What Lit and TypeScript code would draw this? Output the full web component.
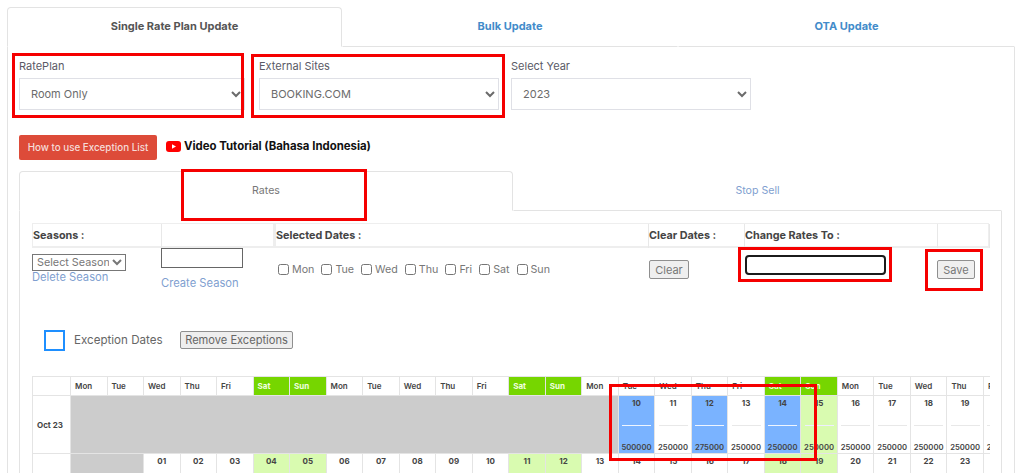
import { LitElement, html, css } from "lit";
import { customElement } from "lit/decorators.js";

type Kind = "w" | "g" | "b";
const heads = ["Mon", "Tue", "Wed", "Thu", "Fri", "Sat", "Sun"];
const week = Array.from({ length: 26 }, (_, i) => heads[i % 7]);
const row1: { d: string; p: string; k: Kind }[] = [
  { d: "10", p: "500000", k: "b" },
  { d: "11", p: "250000", k: "w" },
  { d: "12", p: "275000", k: "b" },
  { d: "13", p: "250000", k: "w" },
  { d: "14", p: "250000", k: "b" },
  { d: "15", p: "250000", k: "g" },
  { d: "16", p: "250000", k: "w" },
  { d: "17", p: "250000", k: "w" },
  { d: "18", p: "250000", k: "w" },
  { d: "19", p: "250000", k: "w" },
  { d: "20", p: "250000", k: "w" },
];
const row2 = Array.from({ length: 24 }, (_, i) => {
  const col = i + 2;
  const wd = col % 7;
  return { d: String(i + 1).padStart(2, "0"), k: wd === 5 || wd === 6 ? "g" : "w" };
});

@customElement("app-root")
export class AppRoot extends LitElement {
  static styles = css`
    :host {
      display: block;
      position: relative;
      width: 1024px;
      height: 473px;
      overflow: hidden;
      background: #fff;
      font-family: Inter, "Open Sans", sans-serif;
      color: #555;
      font-size: 11px;
      box-sizing: border-box;
      padding: 7px 9px 0 7px;
    }
    * { box-sizing: border-box; }
    .tabs { display: grid; grid-template-columns: 335px 336px 1fr; height: 40px; }
    .tab {
      display: flex;
      align-items: center;
      justify-content: center;
      font-weight: 700;
      font-size: 11px;
      color: #428bca;
      border: 1px solid transparent;
      border-bottom-color: #e3e3e3;
      padding-bottom: 3px;
    }
    .tab.on {
      color: #555;
      border-color: #e3e3e3;
      border-bottom-color: transparent;
      border-radius: 4px 4px 0 0;
    }
    .pane {
      border: 1px solid #e3e3e3;
      border-top: 0;
      padding: 11px 12px 0 11px;
      height: 430px;
    }
    .forms { display: grid; grid-template-columns: 240px 252px 252px; }
    .group label { display: block; font-size: 11px; line-height: 16px; margin-bottom: 4px; color: #5a5a66; }
    .group { padding-right: 12px; }
    .group:first-child { padding-right: 14px; }
    .group select {
      display: block;
      width: 100%;
      height: 32px;
      border: 1px solid #dfe0e6;
      background: #fff;
      color: #6b6b6b;
      font: 11px Inter, sans-serif;
      padding-left: 7px;
      border-radius: 0;
    }
    .help { display: flex; align-items: center; margin-top: 25px; height: 25px; }
    .red-btn {
      width: 138px;
      height: 25px;
      background: #dd4b39;
      border: 0;
      border-radius: 2px;
      color: #f6dcd8;
      font: 500 9.8px Inter, sans-serif;
      padding: 0;
    }
    .yt { display: block; margin: 0 3px 3px 9px; }
    .video { font-weight: 700; font-size: 11.4px; color: #111; margin-bottom: 3px; }
    .inner-tabs { display: grid; grid-template-columns: 494px 1fr; height: 40px; margin-top: 11px; }
    .itab {
      display: flex;
      align-items: center;
      justify-content: center;
      font-size: 10.6px;
      color: #7f9fd0;
      border: 1px solid transparent;
      border-bottom-color: #e3e3e3;
      padding-bottom: 2px;
    }
    .itab.on {
      color: #777;
      border-color: #e3e3e3;
      border-bottom-color: transparent;
      border-radius: 4px 4px 0 0;
    }
    .inner {
      border: 1px solid #e3e3e3;
      border-top: 0;
      padding: 12px 12px 0 12px;
      height: 280px;
    }
    .cols {
      display: grid;
      grid-template-columns: 129px 114px 373px 96px 193px 52px;
    }
    .cols.head {
      height: 25px;
      border: 1px solid #eee;
      border-width: 1px 1px 2px 1px;
    }
    .cols.head > div {
      border-right: 1px solid #e8e8e8;
      font-weight: 700;
      font-size: 10.8px;
      color: #444;
      line-height: 24px;
      white-space: nowrap;
    }
    .cols.head > div:nth-child(2) { border-right: 3px solid #eee; }
    .cols.body { height: 82px; }
    .link { color: #7f9fd0; font-size: 11.2px; line-height: 14px; white-space: nowrap; }
    .c1 { padding-top: 6px; }
    .c1 select {
      display: block;
      width: 94px;
      height: 17px;
      font: 10.8px Inter, sans-serif;
      color: #777;
      background: #fff;
      border: 1px solid #777;
      border-radius: 0;
      padding: 0;
    }
    .c1 .link { margin-top: -1px; }
    .c2 input {
      display: block;
      width: 82px;
      height: 20px;
      border: 1px solid #666;
      border-radius: 0;
      margin-bottom: 8px;
    }
    .c3 { display: flex; align-items: flex-start; gap: 7px; padding: 14px 0 0 3px; }
    .day { display: flex; align-items: center; gap: 3px; font-size: 10.7px; color: #777; height: 14px; }
    .day input { margin: 0; width: 11px; height: 11px; }
    .gbtn {
      height: 19px;
      background: #efefef;
      border: 1px solid #8f8f8f;
      border-radius: 2px;
      font: 11px Inter, sans-serif;
      color: #777;
      padding: 0;
    }
    .c4 { padding: 12px 0 0 1px; }
    .c4 .gbtn { width: 40px; }
    .c5 { padding: 7px 0 0 1px; }
    .c5 input {
      display: block;
      width: 141px;
      height: 20px;
      border: 2px solid #1b1b1b;
      border-radius: 4px;
      outline: none;
    }
    .c6 { padding-top: 12px; }
    .c6 .gbtn { width: 38px; }
    .exc { display: flex; align-items: center; height: 22px; margin: -1px 0 0 12px; }
    .sq { width: 21px; height: 21px; border: 2px solid #1e8fff; }
    .exc span { margin-left: 9px; font-size: 11.6px; color: #666; width: 106px; white-space: nowrap; }
    .exc .gbtn { width: 113px; height: 18px; font-size: 11.1px; background: #eee; color: #666; }
    .cal {
      position: absolute;
      left: 32px;
      top: 376px;
      width: 958px;
      height: 97px;
      overflow: hidden;
      background: #e4e4e4;
      padding: 1px 0 0 1px;
    }
    .cal-grid {
      display: grid;
      grid-template-columns: 37px repeat(26, 35.52px);
      grid-template-rows: 18px 57px 40px;
      gap: 1px;
      width: max-content;
    }
    .cell { background: #fff; font-size: 8px; color: #444; font-weight: 600; white-space: nowrap; overflow: hidden; }
    .hd { padding: 0 0 0 4px; line-height: 18px; }
    .hd.we { background: #76d600; color: #f2ffe0; font-weight: 700; }
    .lbl { display: flex; align-items: center; padding-left: 4px; font-weight: 700; }
    .grey { background: #ccc; }
    .d {
      display: flex;
      flex-direction: column;
      align-items: center;
      font-size: 8px;
      font-weight: 700;
      padding-top: 2px;
    }
    .d .n { line-height: 10px; }
    .d hr { width: 29px; height: 1px; margin: 17px 0 0; border: 0; background: #e8e8e8; }
    .d .p { margin-top: 17px; line-height: 10px; font-size: 7.7px; font-weight: 600; }
    .d.b { background: #7ab3ff; }
    .d.b hr { background: #eef5ff; }
    .d.g { background: #d9fbb0; }
    .d.g hr { background: #eef; }
    .red { position: absolute; border: 3px solid #f50000; pointer-events: none; }
    .r1 { left: 12px; top: 53px; width: 232px; height: 65px; }
    .r2 { left: 251px; top: 54px; width: 254px; height: 64px; }
    .r3 { left: 181px; top: 169px; width: 186px; height: 52px; }
    .r4 { left: 738px; top: 247px; width: 154px; height: 35px; }
    .r5 { left: 925px; top: 249px; width: 58px; height: 42px; }
    .r6 { left: 609px; top: 384px; width: 208px; height: 77px; }
  `;

  render() {
    return html`
      <div class="tabs">
        <div class="tab on">Single Rate Plan Update</div>
        <div class="tab">Bulk Update</div>
        <div class="tab">OTA Update</div>
      </div>
      <div class="pane">
        <div class="forms">
          <div class="group"><label>RatePlan</label><select><option>Room Only</option></select></div>
          <div class="group"><label>External Sites</label><select><option>BOOKING.COM</option></select></div>
          <div class="group"><label>Select Year</label><select><option>2023</option></select></div>
        </div>
        <div class="help">
          <button class="red-btn">How to use Exception List</button>
          <svg class="yt" width="15" height="11" viewBox="0 0 15 11">
            <rect width="15" height="11" rx="3" fill="#f00"></rect>
            <path d="M6 3.2 L10 5.5 L6 7.8 Z" fill="#fff"></path>
          </svg>
          <span class="video">Video Tutorial (Bahasa Indonesia)</span>
        </div>
        <div class="inner-tabs">
          <div class="itab on">Rates</div>
          <div class="itab">Stop Sell</div>
        </div>
        <div class="inner">
          <div class="cols head">
            <div>Seasons :</div>
            <div></div>
            <div>Selected Dates :</div>
            <div>Clear Dates :</div>
            <div>Change Rates To :</div>
            <div></div>
          </div>
          <div class="cols body">
            <div class="c1">
              <select><option>Select Season</option></select>
              <div class="link">Delete Season</div>
            </div>
            <div class="c2">
              <input type="text" />
              <div class="link">Create Season</div>
            </div>
            <div class="c3">
              ${heads.map((h) => html`<label class="day"><input type="checkbox" />${h}</label>`)}
            </div>
            <div class="c4"><button class="gbtn">Clear</button></div>
            <div class="c5"><input type="text" /></div>
            <div class="c6"><button class="gbtn">Save</button></div>
          </div>
          <div class="exc">
            <div class="sq"></div>
            <span>Exception Dates</span>
            <button class="gbtn">Remove Exceptions</button>
          </div>
        </div>
      </div>
      <div class="cal">
        <div class="cal-grid">
          <div class="cell"></div>
          ${week.map(
            (h) => html`<div class="cell hd ${h === "Sat" || h === "Sun" ? "we" : ""}">${h}</div>`
          )}
          <div class="cell lbl">Oct 23</div>
          <div class="cell grey" style="grid-column: span 15"></div>
          ${row1.map(
            (c) => html`<div class="cell d ${c.k}">
              <span class="n">${c.d}</span><hr /><span class="p">${c.p}</span>
            </div>`
          )}
          <div class="cell"></div>
          <div class="cell grey" style="grid-column: span 2"></div>
          ${row2.map((c) => html`<div class="cell d ${c.k}"><span class="n">${c.d}</span></div>`)}
        </div>
      </div>
      <div class="red r1"></div>
      <div class="red r2"></div>
      <div class="red r3"></div>
      <div class="red r4"></div>
      <div class="red r5"></div>
      <div class="red r6"></div>
    `;
  }
}
